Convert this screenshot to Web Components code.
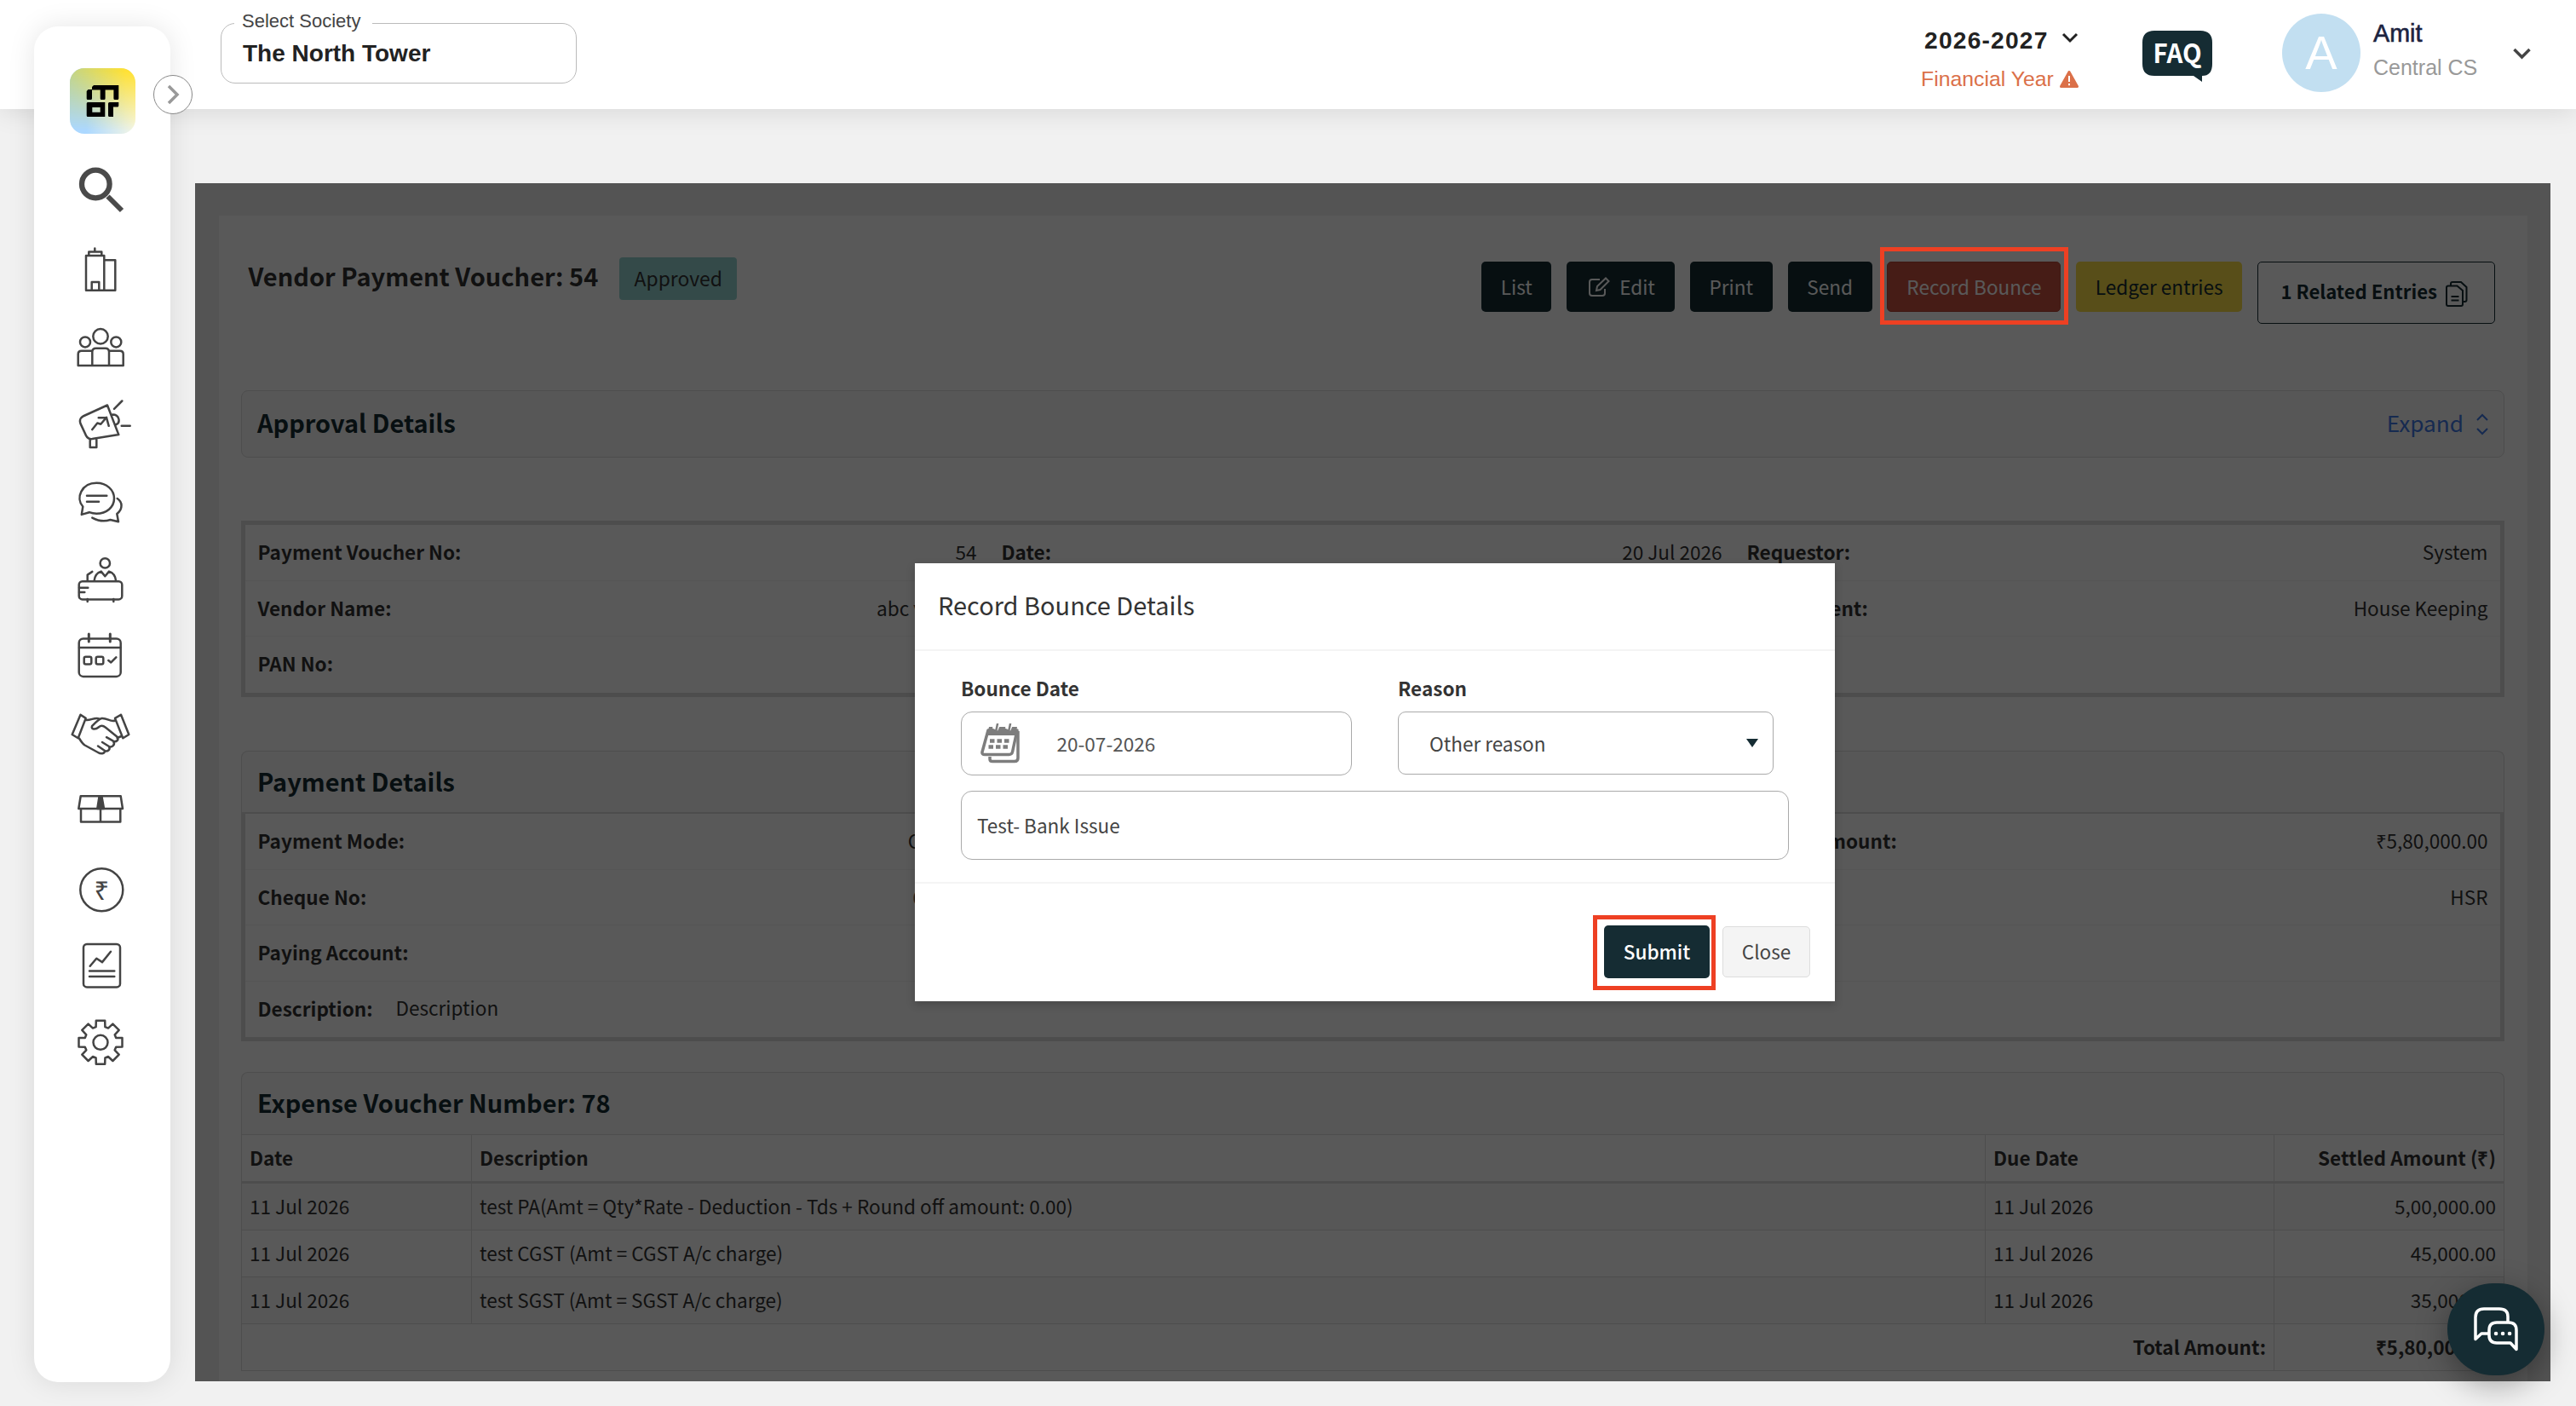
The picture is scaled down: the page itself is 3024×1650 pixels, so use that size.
<!DOCTYPE html>
<html lang="en">
<head>
<meta charset="utf-8">
<title>Vendor Payment Voucher</title>
<style>
  body {
    margin: 0;
    width: 3024px;
    height: 1650px;
    overflow: hidden;
    background: #f1f1f1;
    color: #333;
    font-family: "Noto Sans CJK SC", "Open Sans", sans-serif;
    font-size: 22.55px;
  }
</style>
</head>
<body>

<app-shell>
  <app-header slot="header"></app-header>
  <side-nav slot="nav"></side-nav>

  <work-space>
    <title-bar>
      <span>Vendor Payment Voucher: 54</span>
      <status-badge>Approved</status-badge>
      <action-button slot="actions" style="width:82px">List</action-button>
      <action-button slot="actions" style="width:127px" icon="edit">Edit</action-button>
      <action-button slot="actions" style="width:97px">Print</action-button>
      <action-button slot="actions" style="width:99px">Send</action-button>
      <action-button slot="actions" style="width:204px" kind="danger">Record Bounce</action-button>
      <action-button slot="actions" style="width:195px" kind="warning">Ledger entries</action-button>
      <action-button slot="actions" style="width:278.5px" kind="outline" icon="copy">1 Related Entries</action-button>
    </title-bar>

    <section-panel heading="Approval Details" expandable></section-panel>

    <info-grid style="margin-top:74px">
      <info-cell label="Payment Voucher No:">54</info-cell>
      <info-cell label="Date:">20 Jul 2026</info-cell>
      <info-cell label="Requestor:">System</info-cell>
      <info-cell label="Vendor Name:">abc vendor</info-cell>
      <info-cell></info-cell>
      <info-cell label="Department:">House Keeping</info-cell>
      <info-cell label="PAN No:" last></info-cell>
      <info-cell last></info-cell>
      <info-cell last></info-cell>
    </info-grid>

    <section-panel heading="Payment Details" joined style="margin-top:63px">
      <info-grid joined>
        <info-cell label="Payment Mode:">Cheque</info-cell>
        <info-cell></info-cell>
        <info-cell label="Paying Amount:">₹5,80,000.00</info-cell>
        <info-cell label="Cheque No:">000123</info-cell>
        <info-cell></info-cell>
        <info-cell label="Branch:">HSR</info-cell>
        <info-cell label="Paying Account:"></info-cell>
        <info-cell></info-cell>
        <info-cell></info-cell>
        <info-cell label="Description:" inline last>Description</info-cell>
        <info-cell last></info-cell>
        <info-cell last></info-cell>
      </info-grid>
    </section-panel>

    <section-panel heading="Expense Voucher Number: 78" joined style="margin-top:36px">
      <voucher-table></voucher-table>
    </section-panel>

    <bounce-dialog slot="modal"></bounce-dialog>
    <red-marker slot="float" style="left:1978px;top:75px;width:221px;height:91px"></red-marker>
    <chat-button slot="float"></chat-button>
  </work-space>
</app-shell>

<script>
// small helper so each class only has to provide its markup
class BaseElement extends HTMLElement {
  constructor() {
    super();
    this.attachShadow({ mode: 'open' });
  }
  connectedCallback() {
    this.shadowRoot.innerHTML = this.render();
  }
}

class AppShell extends BaseElement {
  render() {
    return `
    <style>
      :host {
        display: grid;
        grid-template-columns: 229px 2765px 30px;
        grid-template-rows: 128px 1522px;
      }
      slot[name=header] { display: block; grid-area: 1 / 1 / 2 / 4; }
      slot[name=nav] { display: block; grid-area: 1 / 1 / 3 / 2; padding: 31px 29px 28px 40px; z-index: 1; }
      main { grid-area: 2 / 2 / 3 / 3; padding-top: 87px; }
    </style>
    <slot name="header"></slot>
    <slot name="nav"></slot>
    <main><slot></slot></main>`;
  }
}
customElements.define('app-shell', AppShell);

class AppHeader extends BaseElement {
  render() {
    return `
    <style>
      :host {
        display: flex;
        align-items: flex-start;
        box-sizing: border-box;
        height: 128px;
        padding-left: 259px;
        background: #fff;
        box-shadow: 0 4px 28px rgba(0, 0, 0, .1);
        font-family: "Liberation Sans", Arial, sans-serif;
      }
      .society {
        position: relative;
        box-sizing: border-box;
        width: 418px;
        height: 71px;
        margin-top: 27px;
        padding-left: 25px;
        border: 1px solid #bbb;
        border-radius: 17px;
        font-size: 28px;
        font-weight: bold;
        line-height: 69px;
        color: #222;
      }
      .society label {
        position: absolute;
        left: 15px;
        top: -13px;
        width: 153px;
        padding-left: 9px;
        background: #fff;
        font-size: 22px;
        font-weight: normal;
        line-height: 20px;
        color: #444;
      }
      .year { margin: 27px 0 0 1578px; width: 260px; }
      .year div { display: flex; align-items: center; }
      .year .value { padding-left: 4px; gap: 15px; font-size: 28.2px; font-weight: bold; letter-spacing: 1.2px; line-height: 40px; color: #222; }
      .year .value svg { margin-top: -4px; }
      .year .label { gap: 7px; font-size: 24.8px; line-height: 52px; color: #db7049; }
      .faq { margin: 36px 82px 0 0; }
      .avatar {
        width: 92px;
        height: 92px;
        margin-top: 16px;
        border-radius: 50%;
        background: #c2dff1;
        color: #fff;
        font-size: 56px;
        line-height: 92px;
        text-align: center;
      }
      .who { margin: 19px 0 0 15px; width: 164px; }
      .who b { display: block; font-weight: normal; font-size: 28.7px; line-height: 40px; color: #1b2340; -webkit-text-stroke: .6px #1b2340; }
      .who span { display: block; font-size: 25px; line-height: 40px; color: #999; white-space: nowrap; }
      .down { margin-top: 55px; }
    </style>
    <div class="society"><label>Select Society</label>The North Tower</div>
    <div class="year">
      <div class="value">2026-2027
        <svg width="20" height="14" viewBox="0 0 20 14" fill="none" stroke="#222" stroke-width="3"><path d="M2 2l8 8 8-8"/></svg>
      </div>
      <div class="label">Financial Year
        <svg width="22" height="20" viewBox="0 0 22 20"><path d="M11 1.5L20.5 18.5H1.500z" fill="#db7049" stroke="#db7049" stroke-width="3" stroke-linejoin="round"/><path d="M11 6v7M11 15v2.200" stroke="#fff" stroke-width="2"/></svg>
      </div>
    </div>
    <svg class="faq" width="82" height="60" viewBox="0 0 82 60">
      <path d="M14 0h54q14 0 14 14v25q0 14-12 14v7L60 53H14Q0 53 0 39V14Q0 0 14 0z" fill="#152c33"/>
      <text x="12.500" y="38" font-family="Noto Sans CJK SC, sans-serif" font-weight="bold" font-size="31" fill="#fff" textLength="57" lengthAdjust="spacingAndGlyphs">FAQ</text>
    </svg>
    <div class="avatar">A</div>
    <div class="who"><b>Amit</b><span>Central CS</span></div>
    <svg class="down" width="21" height="16" viewBox="0 0 21 16" fill="none" stroke="#444" stroke-width="3.500"><path d="M1.500 3l9 9 9-9"/></svg>`;
  }
}
customElements.define('app-header', AppHeader);

// eight-tooth gear outline
function gearPath(cx, cy) {
  const points = [];
  for (let i = 0; i < 8; i++) {
    const a = i * Math.PI / 4 - Math.PI / 2;
    [[-.29, 19], [-.2, 26], [.2, 26], [.29, 19]].forEach(([d, r]) => {
      points.push((cx + r * Math.cos(a + d)).toFixed(1) + ' ' + (cy + r * Math.sin(a + d)).toFixed(1));
    });
  }
  return 'M' + points.join('L') + 'z';
}

const NAV_ICONS = [
  // buildings
  '<path d="M19 23h21.300v40.700H19zM40.300 28.300h13v35.400h-13M22.300 22.500v-4h15v4M29.300 18v-3.500M25.700 63v-9h8.600v9"/>',
  // people
  '<circle cx="36" cy="26.700" r="8.700"/><circle cx="18" cy="33.400" r="6"/><circle cx="54.300" cy="33.400" r="6"/><path d="M9.700 61V47.500q0-3.800 4-3.800h12.600M9.700 61h53V47.500q0-3.800-4-3.800H46M26.300 61V45q0-4.300 4.300-4.300h11.100Q46 40.700 46 45v16"/>',
  // campaign
  '<path d="M44 17.500l13.300 34.600-31 5q-5 .5-7.300-4l-6.500-14q-2-5.600 3-8.600zM23.700 57.500V67h7.600V56.500M50 28.500q6 0 7.300 5t-3.300 6.800M52 21.800l9.300-9.300M60.700 41.800h10M26.300 46.100l6-7.600 4 1.300 6.700-8M33.700 32.200h9.300l2.700 9.600"/>',
  // messages
  '<path d="M15.300 45.500c-9-10-1.500-27.700 16-27.700 12 0 20.700 8 20.700 18.200S43 53.700 31.300 53.700q-4.500 0-8.500-1.500l-9 2.700zM20 32.700h23.300M20 39.800h14M55.700 36c6 4 7 12-.4 18l1.700 9.300-9.500-2.300c-7 2.500-14 1.500-21.200-2.400"/>',
  // front desk
  '<circle cx="41.300" cy="20.900" r="5.700"/><path d="M28.700 41.200q1-8.500 8-10.600l4.600 5.700 4.700-5.700q7 2.100 8 10.600M20.700 41.200v-6.600l5.600-3.700M11 49.700h10.300M11 54.900h6.300M20.700 63v3M51.300 63v3"/><rect x="10.700" y="42.200" width="50.600" height="21.200" rx="4"/>',
  // calendar
  '<rect x="10.700" y="19.500" width="49" height="44.400" rx="5"/><path d="M11 30h48.500M45.300 45l3 2.400 6-6.100"/><path d="M22.300 14v9M47.300 14v9" stroke-width="3"/><rect x="16.700" y="40.800" width="8.600" height="8.800" rx="2"/><rect x="30.700" y="40.800" width="8.600" height="8.800" rx="2"/>',
  // handshake
  '<path d="M12.500 17.700l6.200 4.200-9 23.400-7-4.300zM60 17.700l-7 4.200 9.300 23.400 7-4.300zM18.500 24c6 1 11-4 16-1.500M53.500 24.500c-6 2.500-9-3-16-2.500q-3.500.5-11.500 9.200c-1.500 4 4 4.500 8 1q3.500-3 8 .5l13 10.500c4 4-1 7-4 5.500l-8-4.500M51 49c3 4-2 7.500-5 6l-8-5M46 55c2 4-2 6.500-5 5l-8-5.500M41 60c0 4-5 4-8 2L17.500 53.500q-3-2-6.500-8M60.500 43l-5 2"/>',
  // package
  '<path d="M12.700 23.300h47L62 38H10.300zM13 38v15.500h46.300V38M36 30v23.500"/><path d="M34.500 24h3L40 38h-7.700z" fill="#444"/>',
  // rupee
  '<circle cx="37.300" cy="42.200" r="25"/><text x="37.300" y="54" text-anchor="middle" font-family="Noto Sans, Roboto, sans-serif" font-size="31" fill="#444" stroke="none">₹</text>',
  // report
  '<rect x="16" y="14.900" width="43" height="50.500" rx="4"/><path d="M23.700 40.800l7.600-9 6.700 4.300 10-12.300M23 46.500h29.300M23 53.100h29.300"/>',
  // settings
  '<path d="' + gearPath(36, 40.3) + '"/><circle cx="36" cy="40.300" r="8.500"/>'
];

class SideNav extends BaseElement {
  render() {
    return `
    <style>
      :host {
        display: flex;
        flex-direction: column;
        align-items: center;
        position: relative;
        box-sizing: border-box;
        width: 160px;
        height: 1591px;
        padding-top: 49px;
        background: #fff;
        border-radius: 28px;
        box-shadow: 0 0 32px rgba(0, 0, 0, .1);
      }
      .logo {
        position: relative;
        width: 77px;
        height: 77px;
        border-radius: 17px;
        background: linear-gradient(to right, #acd8ff 25%, #f6f7e4);
        overflow: hidden;
      }
      /* yellow side fades out towards the bottom */
      .logo::before {
        content: "";
        position: absolute;
        inset: 0;
        background: linear-gradient(to right, #c2d488, #ffe135 85%);
        -webkit-mask-image: linear-gradient(#000 5%, transparent 95%);
        mask-image: linear-gradient(#000 5%, transparent 95%);
      }
      .logo svg { position: relative; display: block; }
      .search { margin: 25px 0 10px 4px; }
      svg { flex: none; }
      .item { height: 90.600px; display: flex; align-items: center; margin-left: 4px; }
      .toggle {
        position: absolute;
        left: 140px;
        top: 57px;
        width: 44px;
        height: 44px;
        border: 1px solid #888;
        border-radius: 50%;
        background: #fff;
      }
    </style>
    <div class="logo">
      <svg width="77" height="77" viewBox="0 0 77 77">
        <path d="M28 20h29.300v15.500q0 1.500-1.500 1.500h-3q-1.400 0-1.400-1.500V25.600h-9.800v9.900q0 1.500-1.500 1.500h-3q-1.400 0-1.400-1.500V25.600H26V22zM21.500 25H26v10.500q0 1.500-1.500 1.500H21q-1.300 0-1.300-1.500V27z"/>
        <path fill-rule="evenodd" d="M21 40h20.300v17H21q-1.300 0-1.300-1.500v-14Q19.700 40 21 40zM26.300 46v5.700h9.400V46zM45 41.500q0-1.500 1.500-1.500h10.800v4q0 1.600-1.500 1.600H51V57h-4.500q-1.500 0-1.500-1.500z"/>
      </svg>
    </div>
    <svg class="search" width="80" height="80" fill="none" stroke="#4a4a4a"><circle cx="30.300" cy="34" r="16.300" stroke-width="6.300"/><path d="M44.500 48.500L61 65" stroke-width="6"/></svg>
    ${NAV_ICONS.map(icon => `<div class="item"><svg width="80" height="80" fill="none" stroke="#444" stroke-width="2.500" stroke-linejoin="round" stroke-linecap="round">${icon}</svg></div>`).join('')}
    <div class="toggle"><svg width="44" height="44" fill="none" stroke="#999" stroke-width="3.500"><path d="M17 12l10 10-10 10"/></svg></div>`;
  }
}
customElements.define('side-nav', SideNav);

class WorkSpace extends BaseElement {
  render() {
    return `
    <style>
      :host { display: block; position: relative; height: 1406px; }
      .clip { height: 1406px; overflow: hidden; }
      .card { margin: 38px 27px 0 28px; padding: 0 27px 0 26px; height: 1400px; background: #fff; }
      .overlay {
        position: absolute;
        inset: 0;
        display: flex;
        justify-content: center;
        align-items: flex-start;
        padding: 446px 0 0 5px;
        background: rgba(0, 0, 0, .65);
      }
    </style>
    <div class="clip"><div class="card"><slot></slot></div></div>
    <div class="overlay"><slot name="modal"></slot><slot name="float"></slot></div>`;
  }
}
customElements.define('work-space', WorkSpace);

class TitleBar extends BaseElement {
  render() {
    return `
    <style>
      :host { display: flex; justify-content: space-between; height: 205px; padding: 0 11.500px 0 8.500px; }
      .title { display: flex; gap: 25px; margin-top: 44.500px; font-size: 28.99px; font-weight: bold; line-height: 50px; white-space: nowrap; }
      .actions { display: flex; align-items: flex-start; gap: 17.800px; margin-top: 54px; }
    </style>
    <div class="title"><slot></slot></div>
    <div class="actions"><slot name="actions"></slot></div>`;
  }
}
customElements.define('title-bar', TitleBar);

class StatusBadge extends BaseElement {
  render() {
    return `
    <style>
      :host {
        display: block;
        box-sizing: border-box;
        width: 138px;
        height: 50px;
        margin-top: 4.500px;
        border-radius: 4px;
        background: #95d4d2;
        font-size: 22.9px;
        font-weight: normal;
        line-height: 49px;
        text-align: center;
      }
    </style>
    <slot></slot>`;
  }
}
customElements.define('status-badge', StatusBadge);

class ActionButton extends BaseElement {
  render() {
    const icons = {
      edit: '<svg width="26" height="24" viewBox="0 0 26 24" fill="none" stroke="#fff" stroke-width="2"><path d="M20 14v5q0 3-3 3H5q-3 0-3-3V6q0-3 3-3h9"/><path d="M10 16l1-5L21 1.500l3.500 3.500L14.500 15z"/></svg>',
      copy: '<svg width="26" height="30" viewBox="0 0 26 30" fill="none" stroke="#152c33" stroke-width="2"><path d="M6 5.500V3q0-2 2-2h10l6.500 6v15q0 2-2 2H20"/><path d="M3 5.500h10.500L20 11v16q0 2-2 2H3q-2 0-2-2V7.500q0-2 2-2zM6.500 18h9M6.500 22.500h9"/></svg>'
    };
    const icon = icons[this.getAttribute('icon')] || '';
    return `
    <style>
      :host {
        display: flex;
        justify-content: center;
        box-sizing: border-box;
        height: 59px;
        border-radius: 5px;
        background: #152c33;
        color: #fff;
        line-height: 59.500px;
        white-space: nowrap;
      }
      :host([icon=edit]) { gap: 11px; padding-left: 2px; }
      :host([kind=danger]) { background: #c8523f; border: 1px solid #b64636; line-height: 57.500px; }
      :host([kind=warning]) { background: #fbdf48; color: #152c33; }
      :host([kind=outline]) { height: 73px; gap: 10px; padding-right: 4px; border: 1.500px solid #152c33; background: #fff; color: #152c33; font-weight: bold; font-size: 22.1px; line-height: 67px; }
      svg { margin-top: 18px; }
      :host([kind=outline]) svg { margin-top: 22px; }
    </style>
    ${this.getAttribute('kind') === 'outline' ? '<slot></slot>' + icon : icon + '<slot></slot>'}`;
  }
}
customElements.define('action-button', ActionButton);

class SectionPanel extends BaseElement {
  render() {
    const expand = this.hasAttribute('expandable')
      ? '<span class="expand">Expand <svg width="14" height="26" viewBox="0 0 14 26" fill="none" stroke="#3f78e6" stroke-width="2"><path d="M1 8l6-6 6 6M1 18l6 6 6-6"/></svg></span>'
      : '';
    return `
    <style>
      :host { display: block; }
      .heading {
        display: flex;
        justify-content: space-between;
        box-sizing: border-box;
        height: 79px;
        padding: 0 18px 0 18px;
        border: 1px solid #ddd;
        border-radius: 8px;
        background: #f9f9f9;
        color: #152c33;
        font-size: 28.95px;
        font-weight: bold;
        line-height: 73px;
      }
      :host([joined]) .heading { height: 72.500px; border-bottom: 0; border-radius: 8px 8px 0 0; line-height: 69px; }
      .expand { display: flex; align-items: center; gap: 15px; height: 75px; font-size: 26.2px; font-weight: normal; color: #3f78e6; }
      .expand svg { margin-top: 2px; }
    </style>
    <div class="heading"><span>${this.getAttribute('heading')}</span>${expand}</div>
    <slot></slot>`;
  }
}
customElements.define('section-panel', SectionPanel);

class InfoGrid extends BaseElement {
  render() {
    return `
    <style>
      :host { display: grid; grid-template-columns: 873px 875px 1fr; grid-auto-rows: 65.500px; border: 5px solid #ddd; }
      :host([joined]) { border-top-width: 2px; }
    </style>
    <slot></slot>`;
  }
}
customElements.define('info-grid', InfoGrid);

class InfoCell extends BaseElement {
  render() {
    return `
    <style>
      :host { display: flex; justify-content: space-between; padding: 0 14.500px; border-bottom: 1px solid #f2f2f2; line-height: 63px; white-space: nowrap; }
      :host([last]) { border-bottom: 0; }
      :host([inline]) { justify-content: flex-start; gap: 27px; }
      :host([inline]) span { margin-top: -1px; }
    </style>
    <b>${this.getAttribute('label') || ''}</b><span><slot></slot></span>`;
  }
}
customElements.define('info-cell', InfoCell);

class VoucherTable extends BaseElement {
  render() {
    const rows = [
      ['11 Jul 2026', 'test PA(Amt = Qty*Rate - Deduction - Tds + Round off amount: 0.00)', '11 Jul 2026', '5,00,000.00'],
      ['11 Jul 2026', 'test CGST (Amt = CGST A/c charge)', '11 Jul 2026', '45,000.00'],
      ['11 Jul 2026', 'test SGST (Amt = SGST A/c charge)', '11 Jul 2026', '35,000.00']
    ];
    return `
    <style>
      :host { display: block; border-left: 1px solid #ddd; border-top: 1px solid #ddd; }
      .row { display: grid; grid-template-columns: 270px 1777px 339px 1fr; box-sizing: border-box; height: 55px; border-bottom: 1px solid #ddd; line-height: 52px; }
      .row:nth-of-type(even) { background: #f9f9f9; }
      .row > div { padding: 0 9px; border-right: 1px solid #ddd; }
      .row > div:last-child { text-align: right; }
      .head { height: 57px; border-bottom: 3px solid #ddd; font-weight: bold; line-height: 53px; }
      .total { grid-template-columns: 2386px 1fr; font-weight: bold; text-align: right; }
    </style>
    <div class="row head"><div>Date</div><div>Description</div><div>Due Date</div><div>Settled Amount (₹)</div></div>
    ${rows.map(r => '<div class="row">' + r.map(c => `<div>${c}</div>`).join('') + '</div>').join('')}
    <div class="row total"><div>Total Amount:</div><div>₹5,80,000.00</div></div>`;
  }
}
customElements.define('voucher-table', VoucherTable);

class BounceDialog extends BaseElement {
  render() {
    return `
    <style>
      :host { display: block; position: relative; width: 1080px; height: 514px; background: #fff; box-shadow: 0 4px 10px rgba(0, 0, 0, .2); }
      h2 { box-sizing: border-box; height: 102.500px; margin: 0; padding-left: 27px; border-bottom: 2px solid #f4f4f4; font-size: 28.95px; font-weight: normal; line-height: 97px; }
      .body { padding: 22px 54px 26.500px; border-bottom: 2px solid #f4f4f4; color: #444; }
      .fields { display: flex; gap: 54px; }
      b { display: block; height: 49px; line-height: 43px; color: #333; }
      .input { display: flex; align-items: center; box-sizing: border-box; border: 1.500px solid #aaa; border-radius: 13px; }
      .date { width: 459px; height: 75px; padding-left: 22px; gap: 42.500px; color: #555; }
      .select { width: 441px; height: 74px; padding: 1px 17px 0 36px; justify-content: space-between; border-radius: 9px; }
      .select i { border: 7.500px solid transparent; border-top: 10px solid #152c33; border-bottom: 0; margin-top: 0; }
      .text { width: 972px; height: 81px; margin-top: 18px; padding-left: 18px; }
      footer { display: flex; justify-content: flex-end; align-items: flex-start; gap: 15px; padding: 49px 29px 0 0; }
      button { box-sizing: border-box; margin: 0; padding: 0; border: 0; border-radius: 5px; font: inherit; text-align: center; }
      .submit { width: 124px; height: 62px; padding-bottom: 2px; background: #152c33; color: #fff; font-weight: 500; }
      .close { width: 103px; height: 60px; margin-top: 1px; padding-bottom: 2px; border: 1px solid #ddd; background: #f4f4f4; color: #444; }
    </style>
    <h2>Record Bounce Details</h2>
    <div class="body">
      <div class="fields">
        <div><b>Bounce Date</b>
          <div class="input date">
            <svg width="47" height="47" viewBox="0 0 47 47" fill="none" stroke="#7d7d7d">
              <path d="M11 39v3q0 2.500 3 2.500h26q4 0 4-4V9" stroke-width="3.500" stroke-linejoin="round"/>
              <path d="M9 8h34l-5.500 25.500q-.7 3-4 3H5q-3.500 0-3-3z" stroke-width="3.500" stroke-linejoin="round"/>
              <path d="M10 4h33l-2 10H7.500z" fill="#7d7d7d" stroke="none"/>
              <path d="M19.500 1.500L17 7M34.500 1.500L32 7" stroke="#fff" stroke-width="7"/>
              <path d="M20 .5L18.500 7.500M35 .5L33.500 7.500" stroke-width="2.500" stroke-linecap="round"/>
              <path d="M11 20.500h23M9.500 27.500h23" stroke-width="4.500" stroke-dasharray="5.500 3"/>
            </svg>
            <span>20-07-2026</span>
          </div>
        </div>
        <div><b>Reason</b>
          <div class="input select"><span>Other reason</span><i></i></div>
        </div>
      </div>
      <div class="input text">Test- Bank Issue</div>
    </div>
    <footer>
      <button class="submit">Submit</button>
      <button class="close">Close</button>
    </footer>
    <red-marker style="left:796px;top:413px;width:144px;height:88px"></red-marker>`;
  }
}
customElements.define('bounce-dialog', BounceDialog);

// red frame that points at a control
class RedMarker extends BaseElement {
  render() {
    return `
    <style>
      :host { display: block; position: absolute; box-sizing: border-box; border: 5px solid #ee4023; }
    </style>`;
  }
}
customElements.define('red-marker', RedMarker);

class ChatButton extends BaseElement {
  render() {
    return `
    <style>
      :host {
        display: flex;
        align-items: center;
        justify-content: center;
        position: absolute;
        left: 2644px;
        top: 1291px;
        width: 114px;
        height: 108px;
        border-radius: 54px;
        background: #152c33;
        box-shadow: 0 10px 36px rgba(0, 0, 0, .35);
      }
    </style>
    <svg width="52" height="52" viewBox="0 0 52 52" fill="none" stroke="#fff" stroke-width="3.500" stroke-linejoin="round">
      <path d="M17.500 31H9l-7 6.500V12Q2 2 12 2h18q10 0 10 9v7"/>
      <path d="M27 18h14q9 0 9 9v22.500L43 42H27q-9 0-9-9v-6q0-9 9-9z"/>
      <path d="M26 31h.1M34 31h.1M42 31h.1" stroke-width="4.500" stroke-linecap="round"/>
    </svg>`;
  }
}
customElements.define('chat-button', ChatButton);
</script>
</body>
</html>
